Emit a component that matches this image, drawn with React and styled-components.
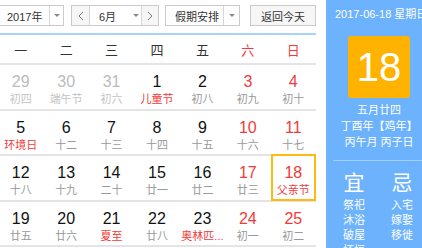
import React from 'react'
import styled, { createGlobalStyle } from 'styled-components'

const GlobalStyle = createGlobalStyle`
    body {
        margin: 0;
        overflow: hidden;
        font-family: "Liberation Sans", Arial, "Noto Sans CJK SC", sans-serif;
        background: #fff;
    }
`

const RED = '#f13a3a'

const Page = styled.div`
    display: flex;
    width: 422px;
    height: 248px;
    overflow: hidden;
`
const LeftPanel = styled.div`
    width: 318px;
    margin-left: -2px;
    flex-shrink: 0;
`
const Toolbar = styled.div`
    height: 35px;
    box-sizing: border-box;
    padding-top: 5px;
    display: flex;
    align-items: flex-start;
    border-bottom: 2px solid #a9d3ff;
`
const SelectBox = styled.div`
    display: flex;
    height: 21px;
    box-sizing: border-box;
    border: 1px solid #cbcbcb;
    margin-left: ${props => props.gap || 0}px;
    background: #fff;
    font-size: 11px;
    color: #333;
`
const Segment = styled.div`
    width: ${props => props.w}px;
    display: flex;
    align-items: center;
    justify-content: ${props => props.center ? 'center' : 'flex-start'};
    padding-left: ${props => props.pl || 0}px;
    box-sizing: border-box;
    white-space: nowrap;
    border-left: ${props => props.divider ? '1px solid #d6d6d6' : 'none'};
    background: ${props => props.shade ? '#f6f6f6' : 'transparent'};
`
const Caret = styled.span`
    width: 0;
    height: 0;
    border-left: 3px solid transparent;
    border-right: 3px solid transparent;
    border-top: 3px solid #8a8a8a;
    margin-left: ${props => props.ml || 0}px;
`
const TodayButton = styled.div`
    margin-left: 10px;
    width: 66px;
    height: 21px;
    box-sizing: border-box;
    border: 1px solid #cbcbcb;
    background: #f6f6f6;
    display: flex;
    align-items: center;
    justify-content: center;
    font-size: 11px;
    color: #333;
`
const WeekHeader = styled.div`
    display: grid;
    grid-template-columns: repeat(7, 1fr);
    height: 28px;
    border-bottom: 2px solid #e4e4e4;
`
const WeekDay = styled.div`
    display: flex;
    align-items: center;
    justify-content: center;
    font-size: 13px;
    color: ${props => props.weekend ? RED : '#333'};
`
const WeekRow = styled.div`
    display: grid;
    grid-template-columns: repeat(7, 1fr);
    height: 43.5px;
    border-bottom: 2px solid #e4e4e4;
`
const Cell = styled.div`
    position: relative;
    display: flex;
    flex-direction: column;
    align-items: center;
    padding-top: 8px;
    &::after {
        content: '';
        display: ${props => props.selected ? 'block' : 'none'};
        position: absolute;
        left: 0;
        right: 0;
        top: -2px;
        bottom: -1px;
        border: 2px solid #ffb90f;
    }
`
const DayNum = styled.div`
    font-size: 16px;
    line-height: 18px;
    color: ${props => props.other ? '#bbb' : props.red ? RED : '#111'};
`
const Lunar = styled.div`
    font-size: 11px;
    line-height: 16px;
    white-space: nowrap;
    color: ${props => props.other ? '#c4c4c4' : props.red ? RED : '#999'};
`
const RightPanel = styled.div`
    margin-left: 10px;
    width: 106px;
    flex-shrink: 0;
    background: #6cb2fd;
    color: #fff;
    display: flex;
    flex-direction: column;
    align-items: center;
    & > * {
        flex-shrink: 0;
    }
`
const DateLine = styled.div`
    align-self: flex-start;
    padding: 6px 0 0 9px;
    font-size: 11px;
    line-height: 16px;
    white-space: nowrap;
`
const BigDay = styled.div`
    margin-top: 14px;
    width: 62px;
    height: 62px;
    border-radius: 3px;
    background: #ffb300;
    display: flex;
    align-items: center;
    justify-content: center;
    font-size: 40px;
`
const LunarInfo = styled.div`
    margin-top: 4px;
    font-size: 11px;
    line-height: 16px;
    text-align: center;
    white-space: nowrap;
`
const Divider = styled.div`
    align-self: stretch;
    margin: 10px 0 0 7px;
    height: 1px;
    background: #a2cfff;
`
const Almanac = styled.div`
    align-self: stretch;
    margin-top: 9px;
    padding-left: 4px;
    display: grid;
    grid-template-columns: 48px 48px;
`
const AlmanacCol = styled.div`
    display: flex;
    flex-direction: column;
    align-items: center;
`
const AlmanacHead = styled.div`
    font-size: 21px;
    line-height: 26px;
    margin-bottom: 2px;
`
const AlmanacItem = styled.div`
    font-size: 11px;
    line-height: 15px;
    white-space: nowrap;
`

const Chevron = ({ dir }) => (
    <svg width="6" height="10" viewBox="0 0 6 10">
        <path d={dir === 'left' ? 'M5 1 L1 5 L5 9' : 'M1 1 L5 5 L1 9'} fill="none" stroke="#777" strokeWidth="1" />
    </svg>
)

const weekDays = ['一', '二', '三', '四', '五', '六', '日']

// [day, lunar, flags] flags: o = other month, r = red number, f = festival (red lunar), s = selected
const weeks = [
    [[29, '初四', 'o'], [30, '端午节', 'o'], [31, '初六', 'o'], [1, '儿童节', 'f'], [2, '初八', ''], [3, '初九', 'r'], [4, '初十', 'r']],
    [[5, '环境日', 'f'], [6, '十二', ''], [7, '十三', ''], [8, '十四', ''], [9, '十五', ''], [10, '十六', 'r'], [11, '十七', 'r']],
    [[12, '十八', ''], [13, '十九', ''], [14, '二十', ''], [15, '廿一', ''], [16, '廿二', ''], [17, '廿三', 'r'], [18, '父亲节', 'rfs']],
    [[19, '廿五', ''], [20, '廿六', ''], [21, '夏至', 'f'], [22, '廿八', ''], [23, '奥林匹...', 'f'], [24, '初一', 'r'], [25, '初二', 'r']],
]

const App = () => {
    return (
        <Page>
            <GlobalStyle />
            <LeftPanel>
                <Toolbar>
                    <SelectBox>
                        <Segment w={50} pl={8}>2017年</Segment>
                        <Segment w={14} center divider><Caret /></Segment>
                    </SelectBox>
                    <SelectBox gap={7}>
                        <Segment w={17} center shade><Chevron dir="left" /></Segment>
                        <Segment w={52} pl={9} divider>6月<Caret ml={17} /></Segment>
                        <Segment w={17} center shade divider><Chevron dir="right" /></Segment>
                    </SelectBox>
                    <SelectBox gap={6}>
                        <Segment w={57} pl={9}>假期安排</Segment>
                        <Segment w={16} center divider><Caret /></Segment>
                    </SelectBox>
                    <TodayButton>返回今天</TodayButton>
                </Toolbar>
                <WeekHeader>
                    {weekDays.map((d, i) => (
                        <WeekDay key={d} weekend={i > 4}>{d}</WeekDay>
                    ))}
                </WeekHeader>
                {weeks.map((week, wi) => (
                    <WeekRow key={wi}>
                        {week.map(([day, lunar, flags]) => {
                            const other = flags.includes('o')
                            return (
                                <Cell key={day + '-' + wi} selected={flags.includes('s')}>
                                    <DayNum other={other} red={flags.includes('r')}>{day}</DayNum>
                                    <Lunar other={other} red={flags.includes('f')}>{lunar}</Lunar>
                                </Cell>
                            )
                        })}
                    </WeekRow>
                ))}
            </LeftPanel>
            <RightPanel>
                <DateLine>2017-06-18 星期日</DateLine>
                <BigDay>18</BigDay>
                <LunarInfo>
                    五月廿四<br />
                    丁酉年【鸡年】<br />
                    丙午月 丙子日
                </LunarInfo>
                <Divider />
                <Almanac>
                    <AlmanacCol>
                        <AlmanacHead>宜</AlmanacHead>
                        <AlmanacItem>祭祀</AlmanacItem>
                        <AlmanacItem>沐浴</AlmanacItem>
                        <AlmanacItem>破屋</AlmanacItem>
                        <AlmanacItem>坏垣</AlmanacItem>
                    </AlmanacCol>
                    <AlmanacCol>
                        <AlmanacHead>忌</AlmanacHead>
                        <AlmanacItem>入宅</AlmanacItem>
                        <AlmanacItem>嫁娶</AlmanacItem>
                        <AlmanacItem>移徙</AlmanacItem>
                    </AlmanacCol>
                </Almanac>
            </RightPanel>
        </Page>
    )
}

export default App
